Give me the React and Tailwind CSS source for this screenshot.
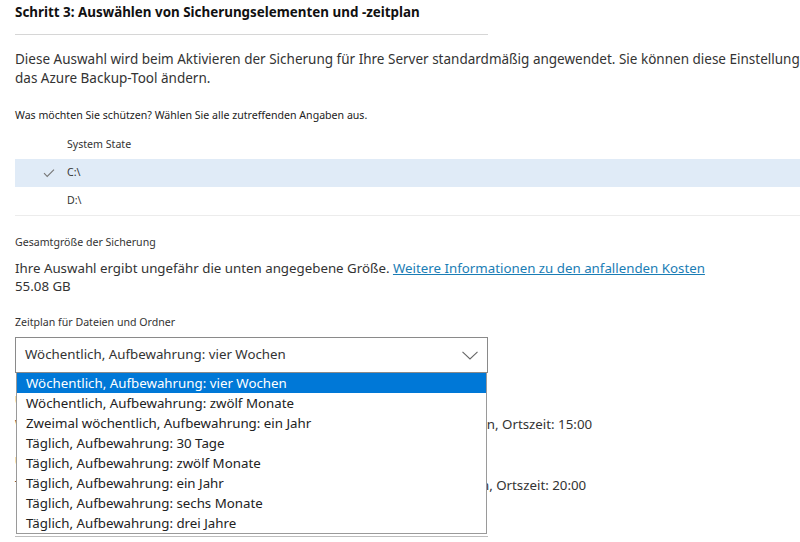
import React from "react";

const font = { fontFamily: '"Segoe UI", "Noto Sans", "Open Sans", sans-serif' };

const options = [
  "Wöchentlich, Aufbewahrung: vier Wochen",
  "Wöchentlich, Aufbewahrung: zwölf Monate",
  "Zweimal wöchentlich, Aufbewahrung: ein Jahr",
  "Täglich, Aufbewahrung: 30 Tage",
  "Täglich, Aufbewahrung: zwölf Monate",
  "Täglich, Aufbewahrung: ein Jahr",
  "Täglich, Aufbewahrung: sechs Monate",
  "Täglich, Aufbewahrung: drei Jahre",
];

function Check() {
  return (
    <svg width="12" height="10" viewBox="0 0 12 10" className="text-[#777]">
      <path d="M1 5.2 L4.2 8.4 L11 1.6" fill="none" stroke="currentColor" strokeWidth="1.1" />
    </svg>
  );
}

function Chevron() {
  return (
    <svg width="16" height="9" viewBox="0 0 16 9" className="text-[#666]">
      <path d="M0.5 0.8 L8 8 L15.5 0.8" fill="none" stroke="currentColor" strokeWidth="1.1" />
    </svg>
  );
}

export default function App() {
  return (
    <div
      className="w-[800px] h-[542px] overflow-hidden bg-white text-[#333] pl-[15px] relative"
      style={font}
    >
      <div className="w-[473px] border-b border-[#d6d6d6] pt-[3px] h-[35px]">
        <div className="text-[13.4px] font-bold text-[#111] leading-[18px] whitespace-nowrap">
          Schritt 3: Auswählen von Sicherungselementen und -zeitplan
        </div>
      </div>

      <div className="mt-[15px] text-[13.5px] leading-[19px] whitespace-nowrap text-[#333]">
        Diese Auswahl wird beim Aktivieren der Sicherung für Ihre Server standardmäßig angewendet. Sie können diese Einstellungen
        <br />
        das Azure Backup-Tool ändern.
      </div>

      <div className="mt-[20px] text-[10.6px] leading-[14px] text-[#222] whitespace-nowrap">
        Was möchten Sie schützen? Wählen Sie alle zutreffenden Angaben aus.
      </div>

      <div className="mt-[9px] border-b border-[#ececec] text-[10.6px] text-[#333]">
        <div className="h-[28px] flex items-center pl-[52px]">System State</div>
        <div className="h-[28px] flex items-center bg-[#e0ebf7]">
          <div className="w-[52px] flex justify-end pr-[12px]">
            <Check />
          </div>
          <span>C:\</span>
        </div>
        <div className="h-[28px] flex items-center pl-[52px]">D:\</div>
      </div>

      <div className="mt-[19px] text-[10.6px] leading-[14px] text-[#333]">Gesamtgröße der Sicherung</div>
      <div className="mt-[10px] text-[13.3px] leading-[18px] text-[#333] whitespace-nowrap">
        Ihre Auswahl ergibt ungefähr die unten angegebene Größe.{" "}
        <span className="text-[#1a7db5] underline">Weitere Informationen zu den anfallenden Kosten</span>
      </div>
      <div className="text-[13.3px] leading-[18px] text-[#333]">55.08 GB</div>

      <div className="mt-[20px] text-[10.6px] leading-[14px] text-[#333]">Zeitplan für Dateien und Ordner</div>

      <div className="mt-[8px] w-[473px] h-[36px] border border-[#8a8a8a] flex items-center justify-between pl-[9px] pr-[9px] text-[13.3px] text-[#333]">
        <span>Wöchentlich, Aufbewahrung: vier Wochen</span>
        <Chevron />
      </div>

      {/* content behind the open list */}
      <div className="w-[473px] text-[13.3px] text-[#333]">
        <div className="mt-[20px] text-[10.6px] leading-[14px]">Uhrzeit für Sicherung</div>
        <div className="mt-[3px] h-[30px] flex items-center whitespace-nowrap">
          Wöchentlich am Sonntag, Mittwoch und Freitag, Aufbewahrung: vier Wochen, Ortszeit: 15:00
        </div>
        <div className="mt-[14px] text-[10.6px] leading-[14px]">Uhrzeit für Sicherung</div>
        <div className="mt-[3px] h-[30px] flex items-center whitespace-nowrap">
          Täglich, an jedem Tag der Woche, Aufbewahrung: sechs Monate, elf Wochen, Ortszeit: 20:00
        </div>
        <div className="mt-[35px] border-b border-[#bdbdbd]"></div>
      </div>

      <div className="absolute left-[16px] top-[373px] w-[471px] bg-white border border-[#9a9a9a] border-t-0 text-[13.3px] leading-[20px]">
        {options.map((o, i) => (
          <div
            key={o}
            className={
              "h-[20px] pl-[9px] whitespace-nowrap " +
              (i === 0 ? "bg-[#0078d7] text-white" : "text-[#222]")
            }
          >
            {o}
          </div>
        ))}
      </div>
    </div>
  );
}
